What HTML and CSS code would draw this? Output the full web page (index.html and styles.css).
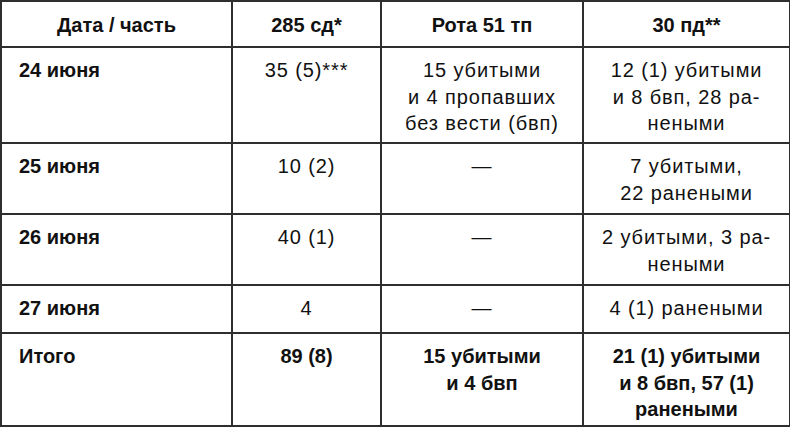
FILE: index.html
```html
<!DOCTYPE html>
<html lang="ru">
<head>
<meta charset="utf-8">
<title>Потери</title>
<link rel="stylesheet" href="styles.css">
</head>
<body>
<table class="losses">
  <colgroup>
    <col class="c-date">
    <col class="c-sd">
    <col class="c-tp">
    <col class="c-pd">
  </colgroup>
  <thead>
    <tr class="row-head">
      <th>Дата / часть</th>
      <th>285 сд*</th>
      <th>Рота 51 тп</th>
      <th>30 пд**</th>
    </tr>
  </thead>
  <tbody>
    <tr class="row-3">
      <td class="date">24 июня</td>
      <td>35 (5)***</td>
      <td>15 убитыми<br>и 4 пропавших<br>без вести (бвп)</td>
      <td>12 (1) убитыми<br>и 8 бвп, 28 ра-<br>неными</td>
    </tr>
    <tr class="row-2">
      <td class="date">25 июня</td>
      <td>10 (2)</td>
      <td>—</td>
      <td>7 убитыми,<br>22 ранеными</td>
    </tr>
    <tr class="row-2">
      <td class="date">26 июня</td>
      <td>40 (1)</td>
      <td>—</td>
      <td>2 убитыми, 3 ра-<br>неными</td>
    </tr>
    <tr class="row-1">
      <td class="date">27 июня</td>
      <td>4</td>
      <td>—</td>
      <td>4 (1) ранеными</td>
    </tr>
    <tr class="row-total">
      <td class="date">Итого</td>
      <td>89 (8)</td>
      <td>15 убитыми<br>и 4 бвп</td>
      <td>21 (1) убитыми<br>и 8 бвп, 57 (1)<br>ранеными</td>
    </tr>
  </tbody>
</table>
</body>
</html>
```
FILE: styles.css
```css
html, body {
  margin: 0;
  padding: 0;
  background: #ffffff;
}

body {
  font-family: "Liberation Sans", Arial, sans-serif;
  color: #111111;
}

.losses {
  border-collapse: collapse;
  table-layout: fixed;
  width: 789px;
  font-size: 20px;
  line-height: 26.6px;
  letter-spacing: 0.9px;
}

.c-date { width: 231px; }
.c-sd { width: 149px; }
.c-tp { width: 202px; }
.c-pd { width: 207px; }

.losses th,
.losses td {
  border: 2px solid #2e2e2e;
  padding: 9px 4px 0;
  text-align: center;
  vertical-align: top;
}

.losses th {
  font-weight: bold;
  letter-spacing: 0;
  padding-top: 10px;
}

.losses td.date {
  text-align: left;
  font-weight: bold;
  letter-spacing: 0;
  padding-left: 17px;
}

.row-head { height: 46px; }
.row-3 { height: 96px; }
.row-2 { height: 71px; }
.row-1 { height: 48px; }
.row-total { height: 93px; }

.row-total td {
  font-weight: bold;
  letter-spacing: 0;
}
```
